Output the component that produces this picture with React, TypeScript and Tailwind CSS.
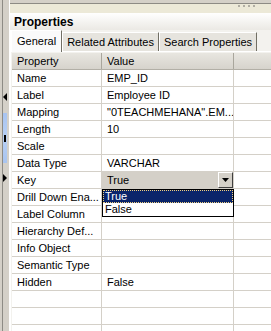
import React from 'react';

const rows: [string, string][] = [
  ['Name', 'EMP_ID'],
  ['Label', 'Employee ID'],
  ['Mapping', '"0TEACHMEHANA".EM...'],
  ['Length', '10'],
  ['Scale', ''],
  ['Data Type', 'VARCHAR'],
  ['Key', 'True'],
  ['Drill Down Ena...', ''],
  ['Label Column', ''],
  ['Hierarchy Def...', ''],
  ['Info Object', ''],
  ['Semantic Type', ''],
  ['Hidden', 'False'],
  ['', ''],
  ['', ''],
  ['', ''],
];

const Splitter = () => (
  <div className="w-[10px] shrink-0 flex flex-col border-l-[2px] border-l-[#d4d0c8] bg-[#d4d0c8]">
    <div className="flex-1 flex flex-col border-l border-[#8d8b85] border-r border-r-[#ffffff]">
      <div className="h-[93px] shrink-0" />
      {/* collapse arrow */}
      <svg width="6" height="8" viewBox="0 0 6 8" className="shrink-0">
        <path d="M4 0 L0 4 L4 8 Z" fill="#000" />
      </svg>
      <div className="h-[12px] shrink-0" />
      <div className="w-[4px] h-[50px] shrink-0 bg-gradient-to-b from-[#a8c4f0] via-[#b8d0f4] to-[#a8c4f0] flex flex-col">
        <div className="h-[22px]" />
        <div className="ml-[1px] w-[2px] h-[7px] bg-black" />
      </div>
      <div className="h-[11px] shrink-0" />
      <svg width="6" height="8" viewBox="0 0 6 8" className="shrink-0">
        <path d="M0 0 L4 4 L0 8 Z" fill="#000" />
      </svg>
    </div>
  </div>
);

const Tab = ({ label, active }: { label: string; active?: boolean }) => (
  <div
    className={
      active
        ? 'h-[22px] px-[5px] flex items-center bg-[#fafafa] border-l border-t border-[#ffffff] border-r border-r-[#716f64] -mb-px relative z-10'
        : 'h-[19px] mt-[2px] px-[4px] flex items-center bg-[#e6e4de] border-l border-t border-[#ffffff] border-r border-r-[#716f64]'
    }
  >
    {label}
  </div>
);

export default function App() {
  return (
    <div className="w-[271px] h-[331px] overflow-hidden flex bg-[#d4d0c8] text-[11px] text-black font-['Tahoma','Liberation_Sans',Arial,sans-serif]">
      <Splitter />
      <div className="flex-1 flex flex-col min-w-0">
        {/* top splitter strip */}
        <div className="h-[10px] shrink-0 border-t border-[#8d8b85] mt-[3px] bg-[#ece9d8] flex justify-end pt-[1px] pr-[16px] gap-[3px]">
          {[0, 1, 2, 3].map((i) => (
            <div key={i} className="w-[2px] h-[2px] bg-[#b0ada3]" />
          ))}
        </div>
        <div className="h-[17px] shrink-0 flex items-center pl-[4px] bg-gradient-to-b from-[#ffffff] to-[#ebe9e4] font-bold text-[12px]">
          Properties
        </div>
        <div className="flex-1 flex flex-col bg-[#f3f2ee] border-l border-[#ffffff]">
          <div className="h-[22px] shrink-0 flex items-end border-b border-[#ffffff]">
            <Tab label="General" active />
            <Tab label="Related Attributes" />
            <Tab label="Search Properties" />
          </div>
          <div className="flex-1 ml-[1px] mt-[1px] bg-white">
            <div className="h-[17px] flex bg-gradient-to-b from-[#e8e6e0] to-[#d6d3cc] border-b border-[#b2afa6]">
              <div className="w-[90px] shrink-0 pl-[5px] flex items-center border-r border-[#a9a69c]">Property</div>
              <div className="w-[132px] shrink-0 pl-[5px] flex items-center border-r border-[#a9a69c]">Value</div>
              <div className="flex-1" />
            </div>
            {rows.map(([k, v], i) => (
              <div key={i} className="h-[17px] flex border-b border-[#d4d0c8] relative">
                <div className="w-[90px] shrink-0 pl-[5px] flex items-center border-r border-[#d4d0c8] whitespace-nowrap overflow-hidden">
                  {k}
                </div>
                {k === 'Key' ? (
                  <div className="w-[132px] shrink-0 flex items-center bg-[#d4d0c8] border-r border-[#d4d0c8]">
                    <span className="flex-1 pl-[5px]">True</span>
                    <div className="w-[15px] h-[16px] bg-[#d4d0c8] border border-t-white border-l-white border-r-[#404040] border-b-[#404040] flex items-center justify-center">
                      <svg width="7" height="4" viewBox="0 0 7 4">
                        <path d="M0 0 H7 L3.5 4 Z" fill="#000" />
                      </svg>
                    </div>
                    <div className="absolute left-[90px] top-[17px] w-[132px] z-20 bg-white border border-black flex flex-col">
                      <div className="h-[13px] flex items-center pl-[1px] bg-[#0a246a] text-white border border-dotted border-[#f0d080]">
                        True
                      </div>
                      <div className="h-[13px] flex items-center pl-[2px]">False</div>
                    </div>
                  </div>
                ) : (
                  <div className="w-[132px] shrink-0 pl-[5px] flex items-center border-r border-[#d4d0c8] whitespace-nowrap overflow-hidden">
                    {v}
                  </div>
                )}
                <div className="flex-1" />
              </div>
            ))}
          </div>
        </div>
      </div>
    </div>
  );
}
